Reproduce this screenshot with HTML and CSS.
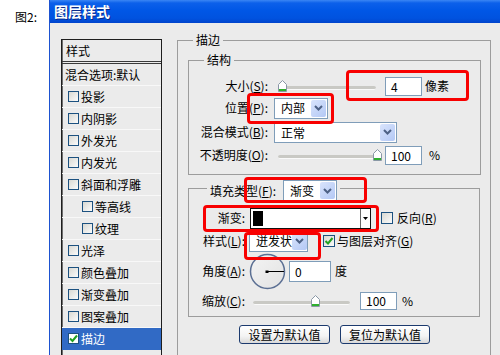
FILE: index.html
```html
<!DOCTYPE html>
<html>
<head>
<meta charset="utf-8">
<link rel="stylesheet" href="styles.css">
</head>
<body>
<div class="page">
  <div class="fig-label">图2:</div>
  <div class="window">
    <div class="titlebar">图层样式</div>
    <div class="wbody">
      <div class="list">
        <div class="list-head">样式</div>
        <div class="row plain">混合选项:默认</div>
        <div class="row"><span class="cb"></span>投影</div>
        <div class="row"><span class="cb"></span>内阴影</div>
        <div class="row"><span class="cb"></span>外发光</div>
        <div class="row"><span class="cb"></span>内发光</div>
        <div class="row"><span class="cb"></span>斜面和浮雕</div>
        <div class="row sub"><span class="cb"></span>等高线</div>
        <div class="row sub"><span class="cb"></span>纹理</div>
        <div class="row"><span class="cb"></span>光泽</div>
        <div class="row"><span class="cb"></span>颜色叠加</div>
        <div class="row"><span class="cb"></span>渐变叠加</div>
        <div class="row"><span class="cb"></span>图案叠加</div>
        <div class="row sel"><span class="cb on"><svg width="9" height="9" viewBox="0 0 9 9"><path d="M1 4.5 L3.5 7 L8 1.5" fill="none" stroke="#21a121" stroke-width="2"/></svg></span>描边</div>
      </div>

      <fieldset class="grp outer">
        <legend>描边</legend>

        <fieldset class="grp struct">
          <legend>结构</legend>
          <div class="form sform">
            <label>大小(<u>S</u>):</label>
            <div class="ctl">
              <div class="slider s98"><span class="thumb t-min"><svg width="9" height="12" viewBox="0 0 9 12"><path d="M0.5 4.5 L4.5 0.5 L8.5 4.5 V11.5 H0.5 Z" fill="#fff" stroke="#8a98a6"/><rect x="1" y="9" width="7" height="2" fill="#2fb02f"/></svg></span></div>
              <div class="input w37 ml9">4</div>
              <span class="unit ml3">像素</span>
            </div>

            <label>位置(<u>P</u>):</label>
            <div class="ctl">
              <div class="select w54 h22"><span class="val">内部</span><span class="dd"><svg width="9" height="6" viewBox="0 0 9 6"><path d="M1 1 L4.5 4.5 L8 1" fill="none" stroke="#4d6185" stroke-width="2"/></svg></span></div>
            </div>

            <label>混合模式(<u>B</u>):</label>
            <div class="ctl">
              <div class="select w123 h21"><span class="val">正常</span><span class="dd"><svg width="9" height="6" viewBox="0 0 9 6"><path d="M1 1 L4.5 4.5 L8 1" fill="none" stroke="#4d6185" stroke-width="2"/></svg></span></div>
            </div>

            <label>不透明度(<u>O</u>):</label>
            <div class="ctl">
              <div class="slider s98"><span class="thumb t-max"><svg width="9" height="12" viewBox="0 0 9 12"><path d="M0.5 4.5 L4.5 0.5 L8.5 4.5 V11.5 H0.5 Z" fill="#fff" stroke="#8a98a6"/><rect x="1" y="9" width="7" height="2" fill="#2fb02f"/></svg></span></div>
              <div class="input w37 ml9">100</div>
              <span class="unit ml7">%</span>
            </div>
          </div>
        </fieldset>

        <fieldset class="grp fill">
          <legend class="fill-legend">
            <span>填充类型(<u>F</u>):</span>
            <div class="select w54 h21 legend-select"><span class="val">渐变</span><span class="dd"><svg width="9" height="6" viewBox="0 0 9 6"><path d="M1 1 L4.5 4.5 L8 1" fill="none" stroke="#4d6185" stroke-width="2"/></svg></span></div>
          </legend>
          <div class="form fform">
            <label>渐变:</label>
            <div class="ctl">
              <div class="gradbox"><span class="swatch"></span><span class="gfill"></span><span class="garrow"><svg width="5" height="3" viewBox="0 0 5 3"><path d="M0 0 H5 L2.5 3 Z" fill="#000"/></svg></span></div>
              <span class="cb12 ml10"></span>
              <span class="ml4">反向(<u>R</u>)</span>
            </div>

            <label>样式(<u>L</u>):</label>
            <div class="ctl">
              <div class="select w59 h22 mln1"><span class="val">迸发状</span><span class="dd"><svg width="9" height="6" viewBox="0 0 9 6"><path d="M1 1 L4.5 4.5 L8 1" fill="none" stroke="#4d6185" stroke-width="2"/></svg></span></div>
              <span class="cb12 ml15"><svg width="10" height="10" viewBox="0 0 10 10"><path d="M1.5 5 L4 7.5 L8.5 2" fill="none" stroke="#21a121" stroke-width="2"/></svg></span>
              <span class="ml2">与图层对齐(<u>G</u>)</span>
            </div>

            <label>角度(<u>A</u>):</label>
            <div class="ctl">
              <svg class="dial mln1" width="37" height="37" viewBox="0 0 37 37">
                <defs><linearGradient id="dg" x1="0" y1="0" x2="1" y2="1"><stop offset="0" stop-color="#f4f4f4"/><stop offset="1" stop-color="#e2e2e2"/></linearGradient></defs>
                <circle cx="18.5" cy="18.5" r="17" fill="url(#dg)" stroke="#5b6f93" stroke-width="1.5"/>
                <line x1="18" y1="18.5" x2="35" y2="18.5" stroke="#000" stroke-width="1"/>
                <rect x="16.5" y="17.5" width="3" height="2.5" fill="#000"/>
              </svg>
              <div class="input w42 h21 ml3">0</div>
              <span class="ml4">度</span>
            </div>

            <label>缩放(<u>C</u>):</label>
            <div class="ctl">
              <div class="slider s97 ml3"><span class="thumb t-mid"><svg width="9" height="12" viewBox="0 0 9 12"><path d="M0.5 4.5 L4.5 0.5 L8.5 4.5 V11.5 H0.5 Z" fill="#fff" stroke="#8a98a6"/><rect x="1" y="9" width="7" height="2" fill="#2fb02f"/></svg></span></div>
              <div class="input w37 h18 ml10">100</div>
              <span class="unit ml5">%</span>
            </div>
          </div>
        </fieldset>

        <div class="buttons">
          <div class="btn b91">设置为默认值</div>
          <div class="btn b90">复位为默认值</div>
        </div>
      </fieldset>

      <div class="mark mark-size"></div>
      <div class="mark mark-pos"></div>
      <div class="mark mark-type"></div>
      <div class="mark mark-grad"></div>
      <div class="mark mark-style"></div>
    </div>
  </div>
</div>
</body>
</html>
```

FILE: styles.css
```css
* { box-sizing: border-box; }
html, body { margin: 0; padding: 0; }
body {
  width: 500px;
  height: 355px;
  overflow: hidden;
  background: #fff;
  font-family: "Noto Sans CJK SC", "Liberation Sans", sans-serif;
  font-size: 12px;
  line-height: 14px;
  color: #000;
}
u { text-decoration: underline; text-underline-offset: 1px; }

.page { display: flex; height: 355px; overflow: hidden; }
.fig-label { flex: none; width: 49px; padding: 10px 0 0 15px; }

.window {
  flex: none;
  width: 451px;
  height: 355px;
  border-left: 1px solid #1d52d0;
  display: flex;
  flex-direction: column;
  overflow: hidden;
}
.titlebar {
  flex: none;
  height: 23px;
  padding-left: 4px;
  background: linear-gradient(to bottom, #3a86f4 0, #0c60ea 3px, #0057e6 45%, #0052df 80%, #0044cc 100%);
  color: #fff;
  font-weight: bold;
  font-size: 14px;
  line-height: 23px;
  text-shadow: 1px 1px 0 #0a2a8a;
}
.wbody {
  flex: 1;
  position: relative;
  overflow: hidden;
  background: #ebebeb;
  display: flex;
  align-items: stretch;
  padding: 16px 0 0 11px;
}

/* style list */
.list {
  flex: none;
  width: 101px;
  border: 1px solid #1e1e1e;
  border-bottom: 0;
  box-shadow: inset 1px 0 0 #6e6e6e;
  background: #ebebeb;
}
.list-head {
  height: 24px;
  padding: 4px 0 0 4px;
  border-bottom: 3px double #3a3a3a;
}
.row {
  height: 22px;
  display: flex;
  align-items: center;
  padding-left: 6px;
  border-bottom: 1px solid #f8f8f8;
}
.row.plain { padding-left: 3px; }
.row.sub { padding-left: 20px; }
.row.sel { background: #316ac5; color: #fff; border-bottom-color: #316ac5; }
.cb {
  flex: none;
  width: 11px;
  height: 11px;
  margin-right: 2px;
  border: 1px solid #1c5180;
  background: linear-gradient(135deg, #d8d8d2, #fbfbfb);
  display: flex;
  align-items: center;
  justify-content: center;
}
.cb.on { background: #fff; }

/* group boxes */
.grp {
  margin: 0;
  min-width: 0;
  border: 1px solid #9c9c9c;
}
.grp > legend {
  padding: 0 3px;
  margin-left: 5px;
  line-height: 14px;
}
.outer {
  flex: none;
  width: 314px;
  margin: -6px 0 -8px 15px;
  padding: 6px 9px 0 10px;
}
.struct {
  width: 293px;
  padding: 8px 0 9px 10px;
}
.fill {
  width: 292px;
  margin-top: 5px;
  padding: 11px 0 4px 10px;
}
.grp > .fill-legend {
  margin-left: 8px;
  display: flex;
  align-items: flex-start;
  height: 16px;
}
.fill-legend > span { padding-top: 4px; }
.legend-select { margin-left: 7px; }

/* forms */
.form { display: grid; align-items: center; }
.form > label { text-align: right; white-space: nowrap; }
.ctl { display: flex; align-items: center; white-space: nowrap; }
.sform {
  grid-template-columns: 69px auto;
  grid-template-rows: 22px 22px 26px 20px;
  column-gap: 6px;
}
.fform {
  grid-template-columns: 46px auto;
  grid-template-rows: 22px 22px 36px 22px;
  row-gap: 1px;
  column-gap: 5px;
}

.ml2 { margin-left: 2px; }
.ml3 { margin-left: 3px; }
.ml4 { margin-left: 4px; }
.ml5 { margin-left: 5px; }
.ml7 { margin-left: 7px; }
.ml9 { margin-left: 9px; }
.ml10 { margin-left: 10px; }
.ml15 { margin-left: 15px; }
.mln1 { margin-left: -1px; }

/* slider */
.slider {
  position: relative;
  height: 12px;
  margin-left: 4px;
}
.slider::before {
  content: "";
  position: absolute;
  left: 0;
  right: 0;
  top: 6px;
  height: 3px;
  border-radius: 2px;
  background: #c9c9c4;
  border-bottom: 1px solid #fafafa;
}
.s98 { width: 98px; }
.s97 { width: 97px; margin-left: 3px; }
.thumb { position: absolute; top: 0; width: 9px; height: 12px; display: block; }
.thumb svg { display: block; }
.t-min { left: 0; }
.t-max { left: 95px; }
.t-mid { left: 58px; }

/* inputs */
.input {
  height: 19px;
  border: 1px solid #7f9db9;
  background: #fff;
  padding-left: 5px;
  line-height: 17px;
}
.w37 { width: 37px; }
.w42 { width: 42px; }
.h21 { height: 21px; line-height: 19px; }
.h18 { height: 18px; line-height: 16px; }
.h22 { height: 22px; }

.select {
  display: flex;
  align-items: stretch;
  border: 1px solid #7f9db9;
  background: #fff;
  padding: 1px;
  height: 21px;
}
.select .val { flex: 1; padding-left: 5px; display: flex; align-items: center; }
.select .dd {
  flex: none;
  width: 15px;
  border-radius: 2px;
  background: linear-gradient(135deg, #d9e4fc, #b3c8f5);
  display: flex;
  align-items: center;
  justify-content: center;
}
.w54 { width: 54px; }
.w59 { width: 59px; }
.w123 { width: 123px; }

.cb12 {
  flex: none;
  width: 12px;
  height: 12px;
  border: 1px solid #1c5180;
  background: linear-gradient(135deg, #d8d8d2, #fbfbfb);
  display: flex;
  align-items: center;
  justify-content: center;
}

.gradbox {
  width: 121px;
  height: 21px;
  border: 1px solid #111;
  background: #fff;
  display: flex;
  align-items: stretch;
  padding: 2px 0 2px 2px;
}
.swatch { width: 10px; background: #000; }
.gfill { flex: 1; }
.garrow {
  width: 10px;
  margin: -2px 0;
  border-left: 1px solid #6a6a6a;
  display: flex;
  align-items: center;
  justify-content: center;
}
.dial { display: block; flex: none; }

/* buttons */
.buttons {
  display: flex;
  justify-content: center;
  gap: 10px;
  margin-top: 8px;
}
.btn {
  height: 19px;
  border: 1px solid #1c3a6e;
  border-radius: 3px;
  background: linear-gradient(to bottom, #ffffff, #f3f3f3 60%, #d9d9d9);
  display: flex;
  align-items: center;
  justify-content: center;
}
.b91 { width: 91px; }
.b90 { width: 90px; }

/* red annotation frames (overlay) */
.mark {
  position: absolute;
  border: 3px solid #f80000;
  border-radius: 4px;
  pointer-events: none;
}
.mark-size { left: 296px; top: 47px; width: 123px; height: 31px; }
.mark-pos { left: 197px; top: 70px; width: 87px; height: 31px; }
.mark-type { left: 194px; top: 154px; width: 123px; height: 26px; }
.mark-grad { left: 153px; top: 182px; width: 176px; height: 27px; }
.mark-style { left: 194px; top: 209px; width: 77px; height: 28px; }
```
